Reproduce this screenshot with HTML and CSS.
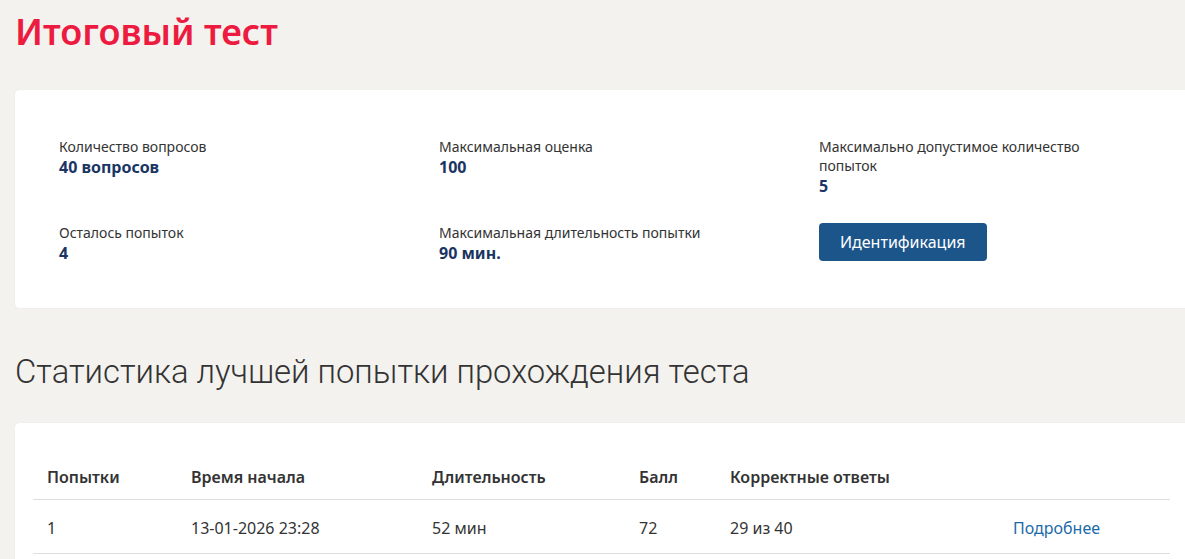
FILE: index.html
```html
<!DOCTYPE html>
<html>

<head>
  <meta charset="UTF-8">
  <meta name="viewport" content="width=device-width, initial-scale=1.0">
  <title>Итоговый тест</title>
  <link rel="stylesheet" href="styles.css">
</head>

<body>
  <div class="page">
    <h1 class="page-title">Итоговый тест</h1>

    <div class="card info-card">
      <div class="info-grid">
        <div class="info-item">
          <div class="info-label">Количество вопросов</div>
          <div class="info-value">40 вопросов</div>
        </div>
        <div class="info-item">
          <div class="info-label">Максимальная оценка</div>
          <div class="info-value">100</div>
        </div>
        <div class="info-item">
          <div class="info-label">Максимально допустимое количество попыток</div>
          <div class="info-value">5</div>
        </div>
        <div class="info-item">
          <div class="info-label">Осталось попыток</div>
          <div class="info-value">4</div>
        </div>
        <div class="info-item">
          <div class="info-label">Максимальная длительность попытки</div>
          <div class="info-value">90 мин.</div>
        </div>
        <div class="info-item">
          <button class="btn" type="button">Идентификация</button>
        </div>
      </div>
    </div>

    <h2 class="section-title">Статистика лучшей попытки прохождения теста</h2>

    <div class="card table-card">
      <table class="attempts">
        <thead>
          <tr>
            <th class="col-num">Попытки</th>
            <th class="col-start">Время начала</th>
            <th class="col-dur">Длительность</th>
            <th class="col-score">Балл</th>
            <th class="col-correct">Корректные ответы</th>
            <th class="col-link"></th>
          </tr>
        </thead>
        <tbody>
          <tr>
            <td>1</td>
            <td>13-01-2026 23:28</td>
            <td>52 мин</td>
            <td>72</td>
            <td>29 из 40</td>
            <td><a href="#" class="more">Подробнее</a></td>
          </tr>
        </tbody>
      </table>
    </div>
  </div>
</body>

</html>
```

FILE: styles.css
```css
body {
  margin: 0;
  background: #f3f2ef;
  font-family: "Noto Sans", "Open Sans", sans-serif;
  color: #333;
  overflow: hidden;
}

.page {
  padding: 0 0 0 15px;
  width: 1190px;
}

.page-title {
  margin: 0;
  padding-top: 8px;
  height: 90px;
  box-sizing: border-box;
  font-family: "Noto Sans", sans-serif;
  font-size: 36px;
  font-weight: 600;
  color: #ec1b3f;
  line-height: 48px;
}

.card {
  background: #fff;
  border-radius: 4px;
  box-shadow: 0 0 1px rgba(0, 0, 0, 0.12);
}

.info-card {
  padding: 47px 44px 47px 44px;
  height: 218px;
  box-sizing: border-box;
}

.info-grid {
  display: grid;
  grid-template-columns: 380px 380px 290px;
  row-gap: 26px;
}

.info-label {
  font-size: 14px;
  line-height: 19px;
  color: #333;
}

.info-value {
  font-size: 16px;
  line-height: 22px;
  font-weight: 700;
  color: #1a3563;
}

.btn {
  padding: 0 21px;
  height: 38px;
  background-color: #1b558a;
  color: #fff;
  border: none;
  border-radius: 4px;
  font-family: "Noto Sans", sans-serif;
  font-size: 16px;
  cursor: pointer;
}

.section-title {
  margin: 0;
  padding-top: 43px;
  height: 115px;
  box-sizing: border-box;
  font-family: "Roboto", sans-serif;
  font-weight: 300;
  font-size: 32.8px;
  line-height: 42px;
  color: #333;
}

.table-card {
  padding: 24px 18px 0 18px;
  height: 200px;
}

.attempts {
  width: 1137px;
  border-collapse: collapse;
  font-size: 16px;
  table-layout: fixed;
}

.attempts th,
.attempts td {
  padding: 18px 14px 14px;
  line-height: 21px;
  text-align: left;
  border-bottom: 1px solid #dedede;
}

.attempts th {
  padding: 20px 14px 11px;
  font-weight: 600;
}

.col-num { width: 116px; }
.col-start { width: 213px; }
.col-dur { width: 179px; }
.col-score { width: 63px; }
.col-correct { width: 255px; }

.more {
  color: #1d6aa8;
  text-decoration: none;
}
```
